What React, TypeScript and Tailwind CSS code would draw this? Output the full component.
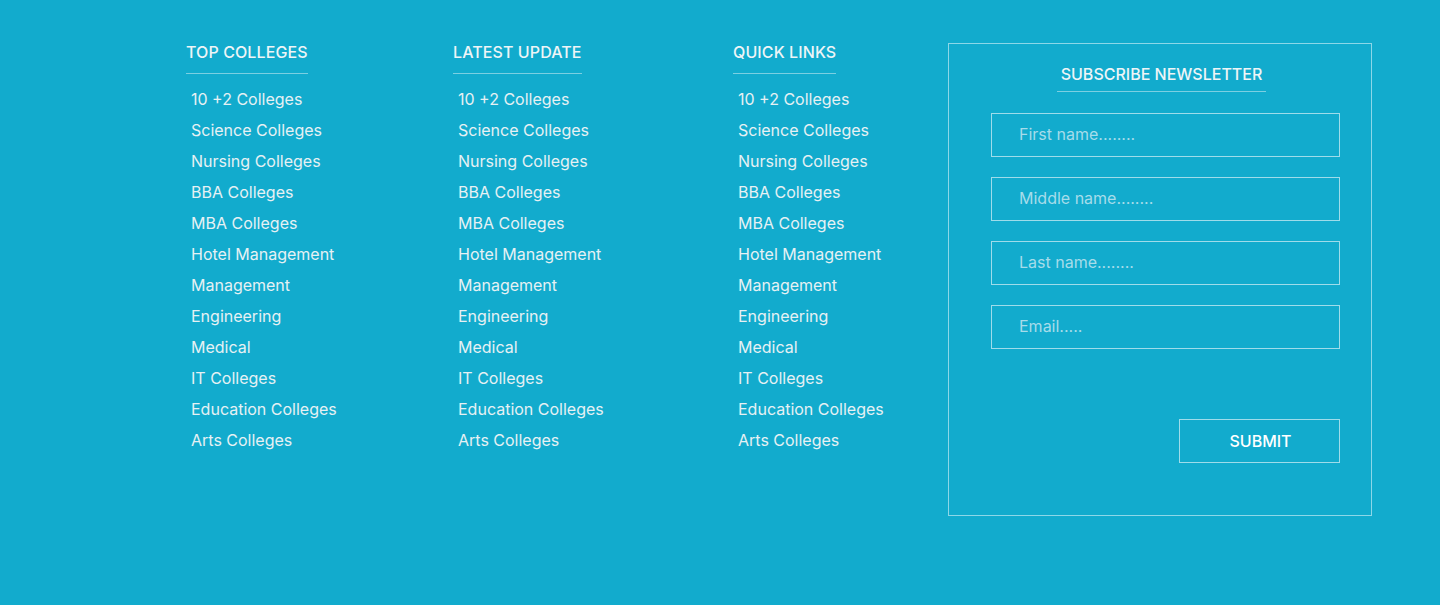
const links = [
  "10 +2 Colleges",
  "Science Colleges",
  "Nursing Colleges",
  "BBA Colleges",
  "MBA Colleges",
  "Hotel Management",
  "Management",
  "Engineering",
  "Medical",
  "IT Colleges",
  "Education Colleges",
  "Arts Colleges",
];

const columns = [
  { title: "TOP COLLEGES", width: "w-[267px]" },
  { title: "LATEST UPDATE", width: "w-[280px]" },
  { title: "QUICK LINKS", width: "w-[215px]" },
];

const fields = ["First name........", "Middle name........", "Last name........", "Email....."];

export default function App() {
  return (
    <div
      className="min-h-[605px] w-full bg-[#12abcd] pt-[43px] pl-[186px]"
      style={{ fontFamily: "Inter, 'Noto Sans', sans-serif" }}>
      <div className="flex items-start">
        {columns.map((col) => (
          <div key={col.title} className={col.width}>
            <h3 className="w-fit border-b border-[#7ccfe2] pb-[12px] text-[16px] font-medium leading-[18px] tracking-[0.1px] text-[#eef5f7]">
              {col.title}
            </h3>
            <ul className="mt-[10px] pl-[5px]">
              {links.map((l) => (
                <li key={l} className="text-[16px] leading-[31px] text-[#e6f1f4]">
                  {l}
                </li>
              ))}
            </ul>
          </div>
        ))}

        <div className="flex h-[473px] w-[424px] flex-col border border-[#8dd7e8] pl-[42px] pr-[31px] pt-[20px]">
          <div className="flex justify-center pr-[8px]">
            <h3 className="border-b border-[#7ccfe2] px-[4px] pb-[7px] text-[16px] font-medium leading-[20px] text-[#eef5f7]">
              SUBSCRIBE NEWSLETTER
            </h3>
          </div>
          <form className="mt-[21px] flex flex-col gap-[20px]" onSubmit={(e) => e.preventDefault()}>
            {fields.map((f) => (
              <input
                key={f}
                type="text"
                placeholder={f}
                className="h-[44px] w-full border border-[#9fdcea] bg-transparent pl-[27px] pb-[2px] text-[16px] text-white outline-none placeholder:text-[#a6dcea]"
              />
            ))}
            <div className="mt-[50px] flex justify-end">
              <button
                type="submit"
                className="h-[44px] w-[161px] border border-[#9fdcea] pl-[2px] text-[16px] font-medium text-white">
                SUBMIT
              </button>
            </div>
          </form>
        </div>
      </div>
    </div>
  );
}
